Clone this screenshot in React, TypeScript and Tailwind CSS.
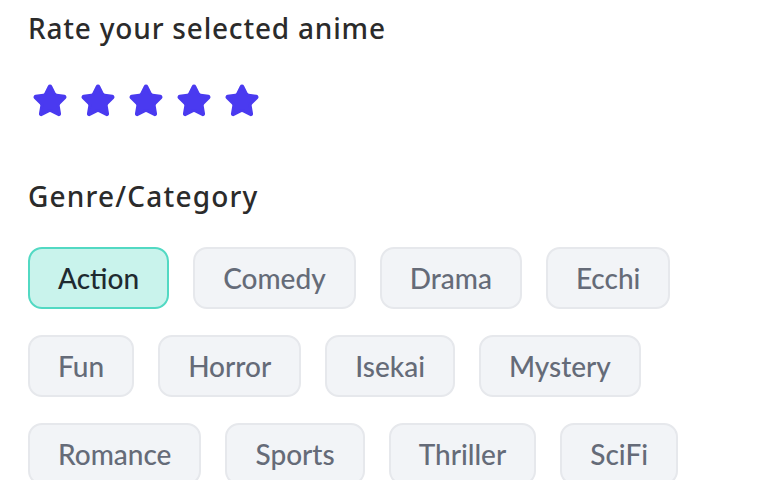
import { Star } from "lucide-react";

const genres = [
	"Action",
	"Comedy",
	"Drama",
	"Ecchi",
	"Fun",
	"Horror",
	"Isekai",
	"Mystery",
	"Romance",
	"Sports",
	"Thriller",
	"SciFi",
];

export default function App() {
	const selected = "Action";
	return (
		<div
			className="min-h-screen bg-white pl-7 pt-[7px] pr-4"
			style={{ fontFamily: "Lato, 'Noto Sans', sans-serif" }}
		>
			<h2
				className="text-[28px] leading-[42px] font-medium tracking-[0.8px] text-[#2b2b2b]"
				style={{ fontFamily: "'Noto Sans', sans-serif" }}
			>
				Rate your selected anime
			</h2>
			<div className="mt-[34px] ml-[4px] flex gap-[12px]">
				{[0, 1, 2, 3, 4].map((i) => (
					<Star
						key={i}
						className="h-[36px] w-[36px] text-[#4a3af0]"
						fill="currentColor"
						strokeWidth={2}
					/>
				))}
			</div>
			<h2
				className="mt-[56px] text-[28px] leading-[42px] font-medium tracking-[1.2px] text-[#2b2b2b]"
				style={{ fontFamily: "'Noto Sans', sans-serif" }}
			>
				Genre/Category
			</h2>
			<div className="mt-[30px] flex flex-wrap gap-x-[24px] gap-y-[26px] max-w-[690px]">
				{genres.map((g) => (
					<button
						key={g}
						type="button"
						className={
							g === selected
								? "rounded-[14px] border-2 border-[#52d9c3] bg-[#c9f3ec] px-[28px] py-[8px] text-[28px] leading-[42px] font-medium text-[#1f2a30]"
								: "rounded-[14px] border-2 border-[#e6e8ec] bg-[#f2f4f7] px-[28px] py-[8px] text-[28px] leading-[42px] font-medium text-[#656b78]"
						}
					>
						{g}
					</button>
				))}
			</div>
		</div>
	);
}
